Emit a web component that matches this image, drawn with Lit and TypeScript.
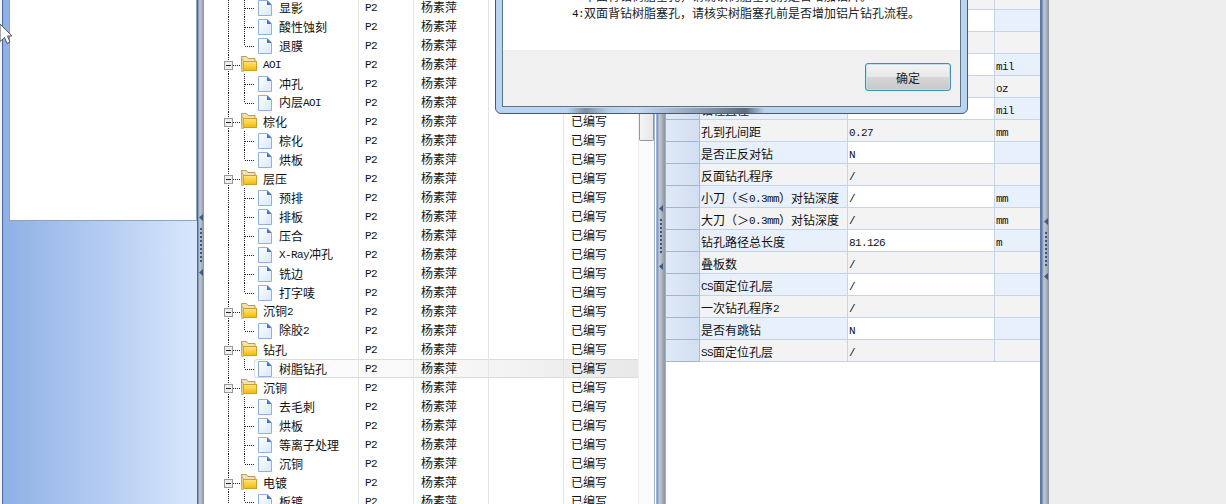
import { LitElement, html, css, svg } from "lit";
import { customElement } from "lit/decorators.js";

type Row = { name: string; folder?: boolean; last?: boolean; sel?: boolean };
const tree: Row[] = [
  { name: "显影" }, { name: "酸性蚀刻" }, { name: "退膜", last: true },
  { name: "AOI", folder: true }, { name: "冲孔" }, { name: "内层AOI", last: true },
  { name: "棕化", folder: true }, { name: "棕化" }, { name: "烘板", last: true },
  { name: "层压", folder: true }, { name: "预排" }, { name: "排板" }, { name: "压合" }, { name: "X-Ray冲孔" }, { name: "铣边" }, { name: "打字唛", last: true },
  { name: "沉铜2", folder: true }, { name: "除胶2", last: true },
  { name: "钻孔", folder: true }, { name: "树脂钻孔", last: true, sel: true },
  { name: "沉铜", folder: true }, { name: "去毛刺" }, { name: "烘板" }, { name: "等离子处理" }, { name: "沉铜", last: true },
  { name: "电镀", folder: true }, { name: "板镀", last: true },
];
const grid: [string, string, string][] = [
  ["", "", ""], ["", "", ""], ["", "", ""], ["", "", "mil"], ["", "", "oz"], ["钻程直径", "", "mil"],
  ["孔到孔间距", "0.27", "mm"], ["是否正反对钻", "N", ""], ["反面钻孔程序", "/", ""],
  ["小刀（≤0.3mm）对钻深度", "/", "mm"], ["大刀（＞0.3mm）对钻深度", "/", "mm"],
  ["钻孔路径总长度", "81.126", "m"], ["叠板数", "/", ""], ["CS面定位孔层", "/", ""],
  ["一次钻孔程序2", "/", ""], ["是否有跳钻", "N", ""], ["SS面定位孔层", "/", ""],
];

const mixed = (t: string) =>
  t.split(/([\x20-\x7e]+)/).filter(Boolean).map((s) =>
    /^[\x20-\x7e]+$/.test(s) ? html`<span class="lat">${s}</span>` : s);

const folderIcon = svg`
  <path d="M22.500 13V1.500h5l1.500 2h7v9.500z" fill="#f3e2b0" stroke="#b79a5c"/>
  <rect x="24.500" y="6.500" width="13" height="9" fill="url(#fy)" stroke="#c9a227"/>
  <path d="M22.500 3v13.500H24.500V6z" fill="#e4cf95" stroke="#b79a5c" stroke-width=".6"/>`;
const docIcon = svg`
  <path d="M39.500 2.500h9l4 4v11h-13z" fill="url(#db)" stroke="#8fb2dc"/>
  <path d="M48 2.500l4.500 4.500h-4.500z" fill="#3f74c6"/>`;

@customElement("app-root")
export class AppRoot extends LitElement {
  static styles = css`
    :host { display: block; font-family: "Noto Sans CJK SC", "Liberation Sans", sans-serif; font-size: 12px; color: #111; }
    .lat { font-family: "Liberation Mono", monospace; font-size: 11px; letter-spacing: -0.6px; color: #111; vertical-align: 1px; }
    .root { position: relative; display: flex; width: 1226px; height: 504px; overflow: hidden; background: #eee; }
    .edge { width: 2px; background: #f4f4f4; flex: none; }
    .left { width: 195px; flex: none; box-sizing: border-box; border-left: 1px solid #4a6a9c; padding-left: 6px; background: linear-gradient(90deg, #8eb0e6, #d8e7fc); }
    .box { width: 188px; height: 221px; box-sizing: border-box; background: #fff; border-bottom: 1px solid #8fa3bd; border-left: 1px solid #8fa3bd; border-right: 1px solid #8fa3bd; }

    .split { flex: none; display: flex; flex-direction: column; align-items: center; box-sizing: border-box; background: linear-gradient(90deg, #6f8fb8, #c4c9d2 30%, #a5abb5 70%, #8a94a4); }
    .s1 { width: 7px; padding-top: 214px; border-left: 1px solid #45689c; }
    .s2 { width: 8px; padding-top: 205px; }
    .s3 { width: 9px; padding-top: 218px; border-left: 2px solid #5b7cab; }
    .tri { width: 4px; height: 7px; flex: none; fill: #3f5a85; }
    .dots { width: 2px; height: 34px; margin: 7px 0; flex: none; background: repeating-linear-gradient(180deg, #35548a 0 2px, transparent 2px 4px); }
    .s2 .dots { margin: 7px 0 10px; }

    .tree { width: 434px; flex: none; background: #fff; overflow: hidden; position: relative; }
    .rows { margin-top: -2px; }
    .tr { position: relative; display: grid; grid-template-columns: 154px 55px 75px 75px 75px; height: 19px; line-height: 18px; box-sizing: border-box; }
    .tr.sel::before { content: ""; position: absolute; left: 50px; right: 0; top: 0; bottom: 0; box-sizing: border-box; border: 1px solid #dcdcdc; border-right: none; border-radius: 3px 0 0 3px; background: linear-gradient(90deg, #fdfdfd, #f8f8f8 50%, #e8e8e8); }
    .name { position: relative; display: flex; align-items: center; padding-left: 15px; white-space: nowrap; height: 19px; }
    .name svg { flex: none; display: block; }
    .ftext { margin-left: 6px; }
    .ltext { margin-left: 6px; }
    .c { position: relative; padding-left: 6px; border-left: 1px solid #e4e4e4; white-space: nowrap; height: 19px; }
    .c.cj { padding-left: 7px; }

    .sb { width: 16px; flex: none; background: #fbfbfb; border-left: 1px solid #f0f0f0; box-sizing: border-box; }
    .thumb { width: 15px; height: 141px; box-sizing: border-box; background: linear-gradient(90deg, #f4f4f4, #e6e6e6); border: 1px solid #979797; border-top: none; border-radius: 0 0 2px 2px; }
    .gap { width: 3px; flex: none; background: #fff; border-left: 1px solid #9fb4d4; border-right: 1px solid #9fb4d4; box-sizing: border-box; }

    .grid { width: 375px; flex: none; background: #fff; border-left: 1px solid #8eb0dc; box-sizing: border-box; overflow: hidden; }
    .g-rows { margin-top: -12px; }
    .gr { display: grid; grid-template-columns: 34px 148px 147px 45px; height: 22px; line-height: 23px; box-sizing: border-box; white-space: nowrap; }
    .gr > div { border-bottom: 1px solid #c4d4ea; box-sizing: border-box; height: 22px; }
    .hd { background: linear-gradient(90deg, #e0e9f6, #d2dff1); border-bottom-color: #a4b6cd !important; border-right: 1px solid #a9bcd4; }
    .lb { padding-left: 1px; border-right: 1px solid #c4d4ea; }
    .v { padding-left: 1px; border-right: 1px solid #c4d4ea; }
    .u { padding-left: 1px; }
    .odd .lb, .odd .u { background: #e8f0fb; }
    .odd .v { background: #fff; }
    .even .lb, .even .v, .even .u { background: #f4f3f3; }

    .right { flex: 1; background: #eee; }

    .dialog { position: absolute; left: 495px; top: -40px; width: 473px; height: 154px; box-sizing: border-box; padding: 6px; border: 1px solid #4a5a6c; border-radius: 0 0 6px 6px; background: linear-gradient(90deg, transparent 15%, #7f8ea0 19%, #b7cfe9 24%, #c4d8ee 30%, #8d9cb0 44%, #5d6b7c 53%, #b7d3ee 57%) bottom / 100% 5px no-repeat, #b9d5f1; display: flex; }
    .inner { flex: 1; display: flex; flex-direction: column; border: 1px solid #5d7387; background: #fff; }
    .msg { flex: 1; padding: 20px 0 0 69px; line-height: 16px; white-space: nowrap; overflow: hidden; color: #222; }
    .foot { flex: none; height: 56px; box-sizing: border-box; background: #f0f0f0; display: flex; justify-content: flex-end; padding: 13px 9px 14px 0; }
    .btn { width: 86px; height: 28px; box-sizing: border-box; border: 1px solid #3c8fb5; border-radius: 3px; background: linear-gradient(180deg, #f5f5f5, #e8e8e8 48%, #d6d6d6 52%, #c8c8c8); box-shadow: inset 0 0 0 1px #bfe0ee; font: inherit; color: #222; padding: 0; }
    .cursor { position: absolute; left: 0; top: 24px; }
  `;

  private splitter(cls: string) {
    const tri = html`<svg class="tri" viewBox="0 0 4 7"><path d="M4 0v7L0 3.500z"/></svg>`;
    return html`<div class="split ${cls}">${tri}<div class="dots"></div>${tri}</div>`;
  }

  private treeRow(r: Row) {
    const w = r.folder ? 38 : 54;
    return html`<div class="tr ${r.sel ? "sel" : ""}">
      <div class="name">
        <svg width=${w} height="19" viewBox="0 0 ${w} 19">
          <path d="M9.500 0V19" stroke="#222" stroke-dasharray="1 1" fill="none"/>
          ${r.folder
            ? svg`
              <rect x="5.500" y="6.500" width="8" height="8" fill="#eee" stroke="#999"/>
              <path d="M7 10.500h5" stroke="#222"/>
              <path d="M14 10.500h7" stroke="#222" stroke-dasharray="1 1"/>
              ${folderIcon}`
            : svg`
              <path d="M25.500 0V${r.last ? 10 : 19}" stroke="#222" stroke-dasharray="1 1" fill="none"/>
              <path d="M26 10.500h9" stroke="#222" stroke-dasharray="1 1"/>
              ${docIcon}`}
        </svg>
        <span class=${r.folder ? "ftext" : "ltext"}>${mixed(r.name)}</span>
      </div>
      <div class="c">${mixed("P2")}</div>
      <div class="c cj">杨素萍</div>
      <div class="c"></div>
      <div class="c cj">已编写</div>
    </div>`;
  }

  render() {
    return html`<div class="root">
      <div class="edge"></div>
      <div class="left"><div class="box"></div></div>
      ${this.splitter("s1")}
      <div class="tree">
        <svg width="0" height="0" style="position:absolute">
          <defs>
            <linearGradient id="fy" x1="0" y1="0" x2="0" y2="1"><stop offset="0" stop-color="#ffe680"/><stop offset="1" stop-color="#f5b800"/></linearGradient>
            <linearGradient id="db" x1="0" y1="0" x2="1" y2="1"><stop offset="0" stop-color="#fff"/><stop offset="1" stop-color="#d8e8fa"/></linearGradient>
          </defs>
        </svg>
        <div class="rows">${tree.map((r) => this.treeRow(r))}</div>
      </div>
      <div class="sb"><div class="thumb"></div></div>
      <div class="gap"></div>
      ${this.splitter("s2")}
      <div class="grid">
        <div class="g-rows">
          ${grid.map((g, i) => html`<div class="gr ${i % 2 ? "odd" : "even"}">
            <div class="hd"></div>
            <div class="lb">${mixed(g[0])}</div>
            <div class="v">${mixed(g[1])}</div>
            <div class="u">${mixed(g[2])}</div>
          </div>`)}
        </div>
      </div>
      ${this.splitter("s3")}
      <div class="right"></div>

      <svg class="cursor" width="13" height="21" viewBox="0 0 13 21">
        <path d="M0 0L12 12H7.500L10 18L7 19.500L4.500 13.500L0 17.500Z" fill="#fff" stroke="#555"/>
      </svg>

      <div class="dialog">
        <div class="inner">
          <div class="msg">
            <div>${mixed("3:单面背钻树脂塞孔，请确认树脂塞孔前是否增加铝片。")}</div>
            <div>${mixed("4:双面背钻树脂塞孔，请核实树脂塞孔前是否增加铝片钻孔流程。")}</div>
          </div>
          <div class="foot"><button class="btn">确定</button></div>
        </div>
      </div>
    </div>`;
  }
}
